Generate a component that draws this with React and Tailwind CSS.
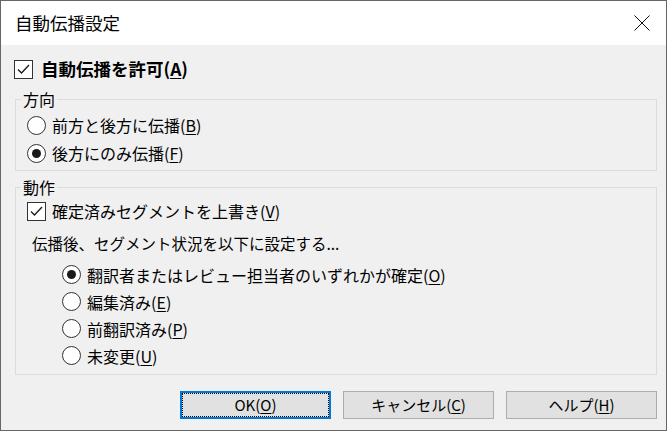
import React from "react";

const FONT = { fontFamily: '"Noto Sans CJK JP", "Noto Sans", sans-serif' };

function CheckBox() {
  return (
    <div className="w-[19px] h-[19px] border border-[#333333] bg-white flex items-center justify-center shrink-0">
      <svg width="17" height="17" viewBox="0 0 17 17">
        <polyline points="3,8.5 6.5,12 14,4" fill="none" stroke="#1a1a1a" strokeWidth="1.3" />
      </svg>
    </div>
  );
}

function Radio({ checked }) {
  return (
    <div className="w-[19px] h-[19px] rounded-full border border-[#333333] bg-white flex items-center justify-center shrink-0">
      {checked && <div className="w-[9px] h-[9px] rounded-full bg-[#1a1a1a]" />}
    </div>
  );
}

function Key({ children }) {
  return <u className="underline underline-offset-2">{children}</u>;
}

function RadioRow({ checked, label, k, h = "h-[28px]" }) {
  return (
    <div className={`flex items-center gap-[6px] ${h}`}>
      <Radio checked={checked} />
      <span className="text-[16px] leading-[20px] text-black whitespace-nowrap">
        {label}(<Key>{k}</Key>)
      </span>
    </div>
  );
}

function Button({ focused, label, k }) {
  if (focused) {
    return (
      <div className="w-[151px] h-[28px] border-2 border-[#0078d7] bg-[#e1e1e1]">
        <div className="w-full h-full border border-dotted border-black flex items-center justify-center text-[15px] leading-[20px] text-black">
          {label}(<Key>{k}</Key>)
        </div>
      </div>
    );
  }
  return (
    <div className="w-[151px] h-[28px] border border-[#adadad] bg-[#e1e1e1] flex items-center justify-center text-[15px] leading-[20px] text-black">
      {label}(<Key>{k}</Key>)
    </div>
  );
}

export default function App() {
  return (
    <div style={FONT} className="w-[667px] h-[431px] border border-[#666666] bg-[#f0f0f0] flex flex-col overflow-hidden">
      <div className="h-[44px] bg-white flex items-center justify-between pl-[14px] pr-[16px] shrink-0">
        <span className="text-[17.5px] leading-[24px] text-black">自動伝播設定</span>
        <svg width="16" height="16" viewBox="0 0 16 16">
          <path d="M0.5 0.5 L15.5 15.5 M15.5 0.5 L0.5 15.5" stroke="#111" strokeWidth="1" fill="none" />
        </svg>
      </div>
      <div className="flex flex-col pt-[12px]">
        <div className="h-[24px] flex items-center gap-[8px] pl-[13px]">
          <CheckBox />
          <span className="text-[17.5px] leading-[22px] font-bold text-black">
            自動伝播を許可(<Key>A</Key>)
          </span>
        </div>

        <fieldset className="ml-[14px] w-[642px] mt-[8px] border border-[#dcdcdc] pt-[2px] pb-[3px] pl-[11px]">
          <legend className="ml-[-6px] px-[2px] text-[16px] leading-[20px] text-black">方向</legend>
          <RadioRow label="前方と後方に伝播" k="B" />
          <RadioRow checked label="後方にのみ伝播" k="F" />
        </fieldset>

        <fieldset className="ml-[14px] w-[642px] mt-[6px] border border-[#dcdcdc] pb-[5px] pl-[11px]">
          <legend className="ml-[-6px] px-[2px] text-[16px] leading-[20px] text-black">動作</legend>
          <div className="h-[28px] flex items-center gap-[6px]">
            <CheckBox />
            <span className="text-[16px] leading-[20px] text-black">
              確定済みセグメントを上書き(<Key>V</Key>)
            </span>
          </div>
          <div className="h-[36px] flex items-center pl-[5px] text-[15.5px] leading-[20px] text-black">
            伝播後、セグメント状況を以下に設定する...
          </div>
          <div className="flex flex-col pl-[35px]">
            <RadioRow checked h="h-[27px]" label="翻訳者またはレビュー担当者のいずれかが確定" k="O" />
            <RadioRow h="h-[27px]" label="編集済み" k="E" />
            <RadioRow h="h-[27px]" label="前翻訳済み" k="P" />
            <RadioRow h="h-[27px]" label="未変更" k="U" />
          </div>
        </fieldset>

        <div className="flex justify-end gap-[12px] pr-[9px] mt-[16px]">
          <Button focused label="OK" k="O" />
          <Button label="キャンセル" k="C" />
          <Button label="ヘルプ" k="H" />
        </div>
      </div>
    </div>
  );
}
